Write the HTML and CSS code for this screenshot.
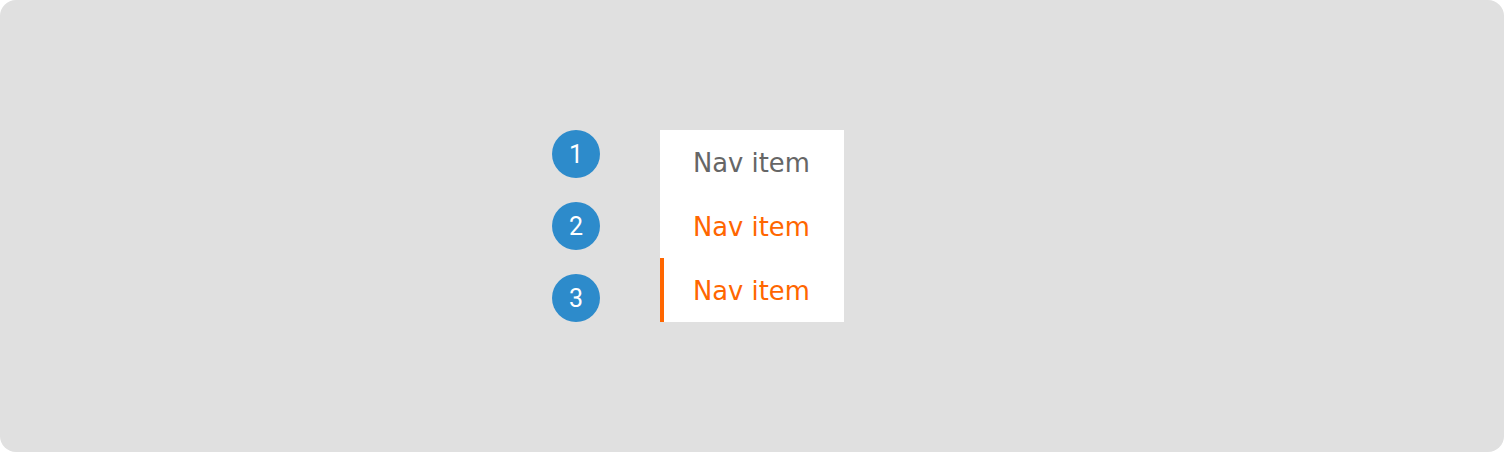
FILE: index.html
```html
<!DOCTYPE html>
<html>
<head>
<meta charset="utf-8">
<link rel="stylesheet" href="styles.css">
</head>
<body>
<div class="stage">
  <div class="demo">
    <div class="markers">
      <div class="marker">1</div>
      <div class="marker">2</div>
      <div class="marker">3</div>
    </div>
    <nav class="nav">
      <div class="nav-item">Nav item</div>
      <div class="nav-item hover">Nav item</div>
      <div class="nav-item active">Nav item</div>
    </nav>
  </div>
</div>
</body>
</html>
```
FILE: styles.css
```css
html, body {
  margin: 0;
  padding: 0;
  background: #ffffff;
}
.stage {
  width: 1504px;
  height: 452px;
  background: #e0e0e0;
  border-radius: 16px;
  display: flex;
  justify-content: center;
  padding-top: 130px;
  box-sizing: border-box;
}
.demo {
  display: flex;
  gap: 60px;
  align-items: flex-start;
  margin-left: -108px;
}
.markers {
  display: flex;
  flex-direction: column;
  gap: 24px;
}
.marker {
  width: 48px;
  height: 48px;
  border-radius: 50%;
  background: #2d8bcb;
  color: #ffffff;
  font-family: Roboto, "Liberation Sans", sans-serif;
  font-size: 25px;
  display: flex;
  align-items: center;
  justify-content: center;
}
.nav {
  width: 184px;
  background: #ffffff;
  display: flex;
  flex-direction: column;
}
.nav-item {
  height: 64px;
  box-sizing: border-box;
  padding-left: 33px;
  padding-top: 2px;
  display: flex;
  align-items: center;
  font-family: "DejaVu Sans", sans-serif;
  font-size: 25.8px;
  color: #666666;
}
.nav-item.hover,
.nav-item.active {
  color: #ff6600;
}
.nav-item.active {
  border-left: 4px solid #ff6600;
  padding-left: 29px;
}
```
